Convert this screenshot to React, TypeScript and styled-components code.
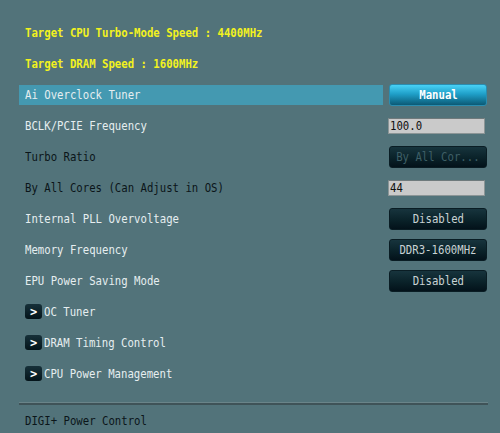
import styled, { createGlobalStyle } from 'styled-components'

const Global = createGlobalStyle`
  html, body {
    margin: 0;
    padding: 0;
    background: #52737a;
  }
  body {
    font-family: 'DejaVu Sans Mono', 'Liberation Mono', monospace;
  }
`

const Screen = styled.div`
  width: 500px;
  height: 433px;
  box-sizing: border-box;
  padding: 17px 12px 0 19px;
  background: #52737a;
  overflow: hidden;
`

const Row = styled.div`
  height: 31px;
  display: flex;
  align-items: center;
  justify-content: space-between;
`

// the BIOS font is tall and narrow, so squeeze a monospace face sideways
const Glyphs = styled.span<{ $origin?: string }>`
  display: inline-block;
  font-size: 13px;
  line-height: 14px;
  white-space: pre;
  transform: scaleX(0.82);
  transform-origin: ${(p) => p.$origin ?? 'left'} center;
`

const Label = styled.div<{ $tone: 'yellow' | 'light' | 'dark'; $active?: boolean }>`
  flex: ${(p) => (p.$active ? '0 0 364px' : '1')};
  height: 20px;
  display: flex;
  align-items: center;
  gap: 2px;
  padding-left: 6px;
  box-sizing: border-box;
  background: ${(p) => (p.$active ? '#4499b1' : 'transparent')};
  font-weight: ${(p) => (p.$tone === 'yellow' ? 'bold' : 'normal')};
  color: ${(p) =>
    p.$tone === 'yellow' ? '#f2f21e' : p.$tone === 'light' ? '#e6eef0' : '#0b1519'};
`

const Button = styled.div<{ $primary?: boolean; $off?: boolean }>`
  width: 98px;
  height: 22px;
  box-sizing: border-box;
  border-radius: 3px;
  display: flex;
  align-items: center;
  justify-content: center;
  font-weight: ${(p) => (p.$primary ? 'bold' : 'normal')};
  color: ${(p) => (p.$primary ? '#ffffff' : p.$off ? '#3e5f66' : '#c9d2d4')};
  background: ${(p) =>
    p.$primary
      ? 'linear-gradient(#48d2f6, #1f9fc8 45%, #0b5a76)'
      : 'linear-gradient(#17343d, #0a2229 55%, #03121a)'};
  border: 1px solid ${(p) => (p.$primary ? '#2a8db0' : '#0a1d24')};
  margin-right: 1px;
`

const Field = styled.div`
  width: 97px;
  height: 16px;
  box-sizing: border-box;
  margin-right: 3px;
  background: #cacaca;
  border: 1px solid #8c9596;
  border-top-color: #6f7a7c;
  display: flex;
  align-items: center;
  padding-left: 1px;
  color: #101010;
`

const Chevron = styled.span`
  width: 17px;
  height: 15px;
  border-radius: 3px;
  background: linear-gradient(#163039, #04141a);
  display: inline-flex;
  align-items: center;
  justify-content: center;
  color: #ffffff;
  font-weight: bold;
  font-size: 12px;
`

const Divider = styled.div`
  margin-top: 13px;
  height: 2px;
  width: 469px;
  background: #3f5358;
  border-top: 1px solid #6a8489;
`

type Tone = 'light' | 'dark'

type Item =
  | { kind: 'info'; text: string }
  | { kind: 'option'; text: string; tone: Tone; value: string; active?: boolean; primary?: boolean; off?: boolean }
  | { kind: 'field'; text: string; tone: Tone; value: string }
  | { kind: 'sub'; text: string }

const items: Item[] = [
  { kind: 'info', text: 'Target CPU Turbo-Mode Speed : 4400MHz' },
  { kind: 'info', text: 'Target DRAM Speed : 1600MHz' },
  { kind: 'option', text: 'Ai Overclock Tuner', tone: 'light', value: 'Manual', active: true, primary: true },
  { kind: 'field', text: 'BCLK/PCIE Frequency', tone: 'light', value: '100.0' },
  { kind: 'option', text: 'Turbo Ratio', tone: 'dark', value: 'By All Cor...', off: true },
  { kind: 'field', text: 'By All Cores (Can Adjust in OS)', tone: 'dark', value: '44' },
  { kind: 'option', text: 'Internal PLL Overvoltage', tone: 'light', value: 'Disabled' },
  { kind: 'option', text: 'Memory Frequency', tone: 'light', value: 'DDR3-1600MHz' },
  { kind: 'option', text: 'EPU Power Saving Mode', tone: 'light', value: 'Disabled' },
  { kind: 'sub', text: 'OC Tuner' },
  { kind: 'sub', text: 'DRAM Timing Control' },
  { kind: 'sub', text: 'CPU Power Management' },
]

export default function App() {
  return (
    <>
      <Global />
      <Screen>
        {items.map((item) => {
          if (item.kind === 'info')
            return (
              <Row key={item.text}>
                <Label $tone='yellow'>
                  <Glyphs>{item.text}</Glyphs>
                </Label>
              </Row>
            )
          if (item.kind === 'option')
            return (
              <Row key={item.text}>
                <Label $tone={item.tone} $active={item.active}>
                  <Glyphs>{item.text}</Glyphs>
                </Label>
                <Button $primary={item.primary} $off={item.off}>
                  <Glyphs $origin='center'>{item.value}</Glyphs>
                </Button>
              </Row>
            )
          if (item.kind === 'field')
            return (
              <Row key={item.text}>
                <Label $tone={item.tone}>
                  <Glyphs>{item.text}</Glyphs>
                </Label>
                <Field>
                  <Glyphs>{item.value}</Glyphs>
                </Field>
              </Row>
            )
          return (
            <Row key={item.text}>
              <Label $tone='light'>
                <Chevron>&gt;</Chevron>
                <Glyphs>{item.text}</Glyphs>
              </Label>
            </Row>
          )
        })}
        <Divider />
        <Row>
          <Label $tone='dark'>
            <Glyphs>DIGI+ Power Control</Glyphs>
          </Label>
        </Row>
      </Screen>
    </>
  )
}
